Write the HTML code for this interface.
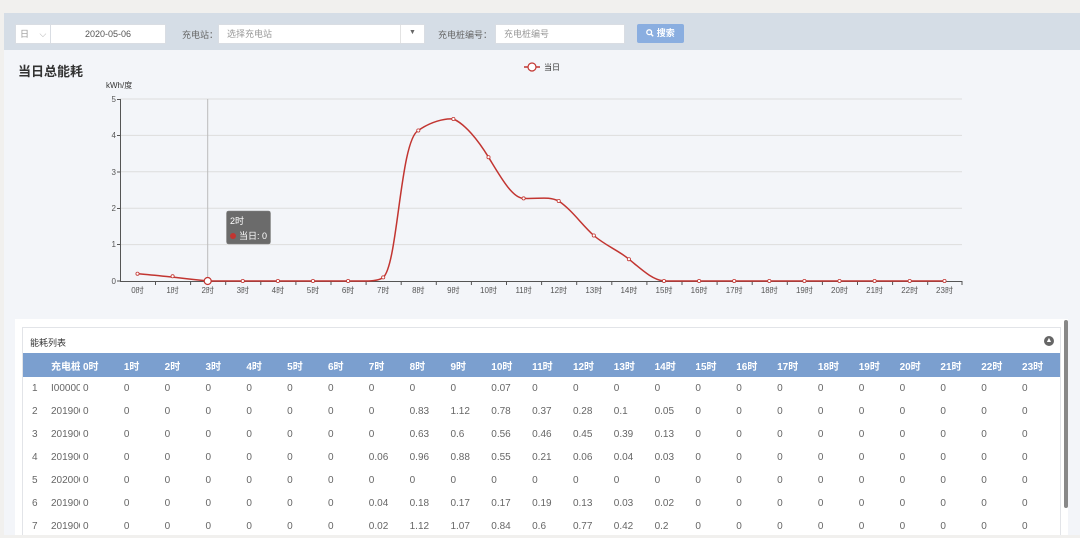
<!DOCTYPE html>
<html><head><meta charset="utf-8"><style>
*{margin:0;padding:0;box-sizing:border-box}
body{width:1080px;height:535px;overflow:hidden;background:#f1f0ee;font-family:"Liberation Sans","Noto Sans CJK SC",sans-serif;font-size:10px;color:#555;position:relative}
.abs{position:absolute}
.bar{left:4px;top:13px;width:1076px;height:37px;background:#d5dde6}
.main{left:4px;top:50px;width:1076px;height:485px;background:#f3f5f9}
.inp{background:#fff;border:1px solid #d9dde3;height:20px;top:24px;line-height:18px;color:#999;font-size:9px}
.panel{left:15px;top:319px;width:1053px;height:216px;background:#fff}
.box{left:22px;top:327px;width:1039px;height:208px;border:1px solid #e2e4e8;border-bottom:none}
table{border-collapse:collapse;table-layout:fixed;position:absolute;left:23px;top:353px;width:1037px}
td{height:23px;padding-left:3px;white-space:nowrap;overflow:hidden;color:#666;font-size:10px}
tr.h td{background:#7b9fcf;color:#fff;font-weight:bold;height:24px}
</style></head><body>
<div class="abs bar"></div>
<div class="abs main"></div>
<div class="abs inp" style="left:15px;width:36px;padding-left:4px">日 <span style="margin-left:8px;color:#aaa">⌵</span></div>
<div class="abs inp" style="left:50px;width:116px;text-align:center;color:#555">2020-05-06</div>
<div class="abs" style="left:182px;top:28px;font-size:9px;color:#666">充电站：</div>
<div class="abs inp" style="left:218px;width:207px;padding-left:8px">选择充电站</div>
<div class="abs" style="left:400px;top:25px;width:1px;height:18px;background:#e3e3e3"></div>
<div class="abs" style="left:409px;top:29px;font-size:7px;color:#666">▼</div>
<div class="abs" style="left:438px;top:28px;font-size:9px;color:#666">充电桩编号：</div>
<div class="abs inp" style="left:495px;width:130px;padding-left:8px">充电桩编号</div>
<div class="abs" style="left:637px;top:24px;width:47px;height:19px;background:#8aaee0;border-radius:2px;color:#fff;font-size:9px;font-weight:bold;line-height:19px;text-align:center"><svg width="8" height="8" viewBox="0 0 10 10" style="vertical-align:-1px"><circle cx="4" cy="4" r="3" fill="none" stroke="#fff" stroke-width="1.6"/><path d="M6.2 6.2L9 9" stroke="#fff" stroke-width="1.8"/></svg> 搜索</div>
<div class="abs" style="left:18px;top:61px;font-size:13px;font-weight:bold;color:#333">当日总能耗</div>
<svg class="abs" style="left:0;top:50px" width="1080" height="260">
<g transform="translate(0,-50)">
<line x1="524" y1="67" x2="540" y2="67" stroke="#c23531" stroke-width="1.5"/><circle cx="532" cy="67" r="4" fill="#fff" stroke="#c23531" stroke-width="1.2"/>
<text x="544" y="70" font-size="8" fill="#333">当日</text>
<text x="106" y="88" font-size="8" fill="#333">kWh/度</text>
<g stroke="#ddd" stroke-width="1">
<line x1="120" y1="99" x2="962" y2="99"/><line x1="120" y1="135.4" x2="962" y2="135.4"/><line x1="120" y1="171.8" x2="962" y2="171.8"/><line x1="120" y1="208.2" x2="962" y2="208.2"/><line x1="120" y1="244.6" x2="962" y2="244.6"/></g>
<line x1="207.7" y1="99" x2="207.7" y2="281" stroke="#bbb"/>
<line x1="120.5" y1="99" x2="120.5" y2="281" stroke="#555"/>
<line x1="120" y1="281.5" x2="962" y2="281.5" stroke="#555"/>
<g font-size="8" fill="#555" text-anchor="end">
<text x="116" y="102">5</text><text x="116" y="138">4</text><text x="116" y="175">3</text><text x="116" y="211">2</text><text x="116" y="247">1</text><text x="116" y="284">0</text></g>
<g stroke="#555">
<line x1="117" y1="99.5" x2="120" y2="99.5"/><line x1="117" y1="135.5" x2="120" y2="135.5"/><line x1="117" y1="172" x2="120" y2="172"/><line x1="117" y1="208.5" x2="120" y2="208.5"/><line x1="117" y1="244.5" x2="120" y2="244.5"/><line x1="117" y1="281" x2="120" y2="281"/>
<path d="M155.5 281v4M190.6 281v4M225.7 281v4M260.8 281v4M295.9 281v4M331 281v4M366.1 281v4M401.2 281v4M436.3 281v4M471.4 281v4M506.5 281v4M541.6 281v4M576.7 281v4M611.8 281v4M646.9 281v4M682 281v4M717.1 281v4M752.2 281v4M787.3 281v4M822.4 281v4M857.5 281v4M892.6 281v4M927.7 281v4M962 281v4"/></g>
<g font-size="8" fill="#555" text-anchor="middle">
<text x="137.5" y="293">0时</text><text x="172.6" y="293">1时</text><text x="207.7" y="293">2时</text><text x="242.8" y="293">3时</text><text x="277.9" y="293">4时</text><text x="313" y="293">5时</text><text x="348.1" y="293">6时</text><text x="383.2" y="293">7时</text><text x="418.3" y="293">8时</text><text x="453.4" y="293">9时</text><text x="488.5" y="293">10时</text><text x="523.6" y="293">11时</text><text x="558.7" y="293">12时</text><text x="593.8" y="293">13时</text><text x="628.9" y="293">14时</text><text x="664" y="293">15时</text><text x="699.1" y="293">16时</text><text x="734.2" y="293">17时</text><text x="769.3" y="293">18时</text><text x="804.4" y="293">19时</text><text x="839.5" y="293">20时</text><text x="874.6" y="293">21时</text><text x="909.7" y="293">22时</text><text x="944.5" y="293">23时</text></g>
<path fill="none" stroke="#c23531" stroke-width="1.5" d="M137.5,273.7 C155,275 190,279 207.7,281 L365,281 C375,281 380,280 383.2,277.4 C398,265 400,140 418.3,130.5 C430,122 445,118 453.4,119 C465,124 478,140 488.5,157.2 C500,176 512,198 523.6,198.4 C540,199 548,196 558.7,201 C572,210 582,225 593.8,235.5 C606,246 618,250 628.9,259.2 C640,268 652,280 664,281 L944.5,281"/>
<g fill="#fff" stroke="#c23531" stroke-width="0.8">
<circle cx="137.5" cy="273.7" r="1.6"/><circle cx="172.6" cy="276.3" r="1.6"/><circle cx="242.8" cy="281" r="1.6"/><circle cx="277.9" cy="281" r="1.6"/><circle cx="313" cy="281" r="1.6"/><circle cx="348.1" cy="281" r="1.6"/><circle cx="383.2" cy="277.4" r="1.6"/><circle cx="418.3" cy="130.5" r="1.6"/><circle cx="453.4" cy="119" r="1.6"/><circle cx="488.5" cy="157.2" r="1.6"/><circle cx="523.6" cy="198.4" r="1.6"/><circle cx="558.7" cy="201" r="1.6"/><circle cx="593.8" cy="235.5" r="1.6"/><circle cx="628.9" cy="259.2" r="1.6"/><circle cx="664" cy="281" r="1.6"/><circle cx="699.1" cy="281" r="1.6"/><circle cx="734.2" cy="281" r="1.6"/><circle cx="769.3" cy="281" r="1.6"/><circle cx="804.4" cy="281" r="1.6"/><circle cx="839.5" cy="281" r="1.6"/><circle cx="874.6" cy="281" r="1.6"/><circle cx="909.7" cy="281" r="1.6"/><circle cx="944.5" cy="281" r="1.6"/>
<circle cx="207.7" cy="281" r="3.5" stroke-width="1.2"/></g>
<rect x="226.5" y="211" width="44" height="33" rx="2" fill="#6b6b6b" stroke="#888" stroke-width="0.5"/>
<text x="230" y="224" font-size="9" fill="#fff">2时</text>
<circle cx="233" cy="236" r="3" fill="#c23531"/>
<text x="239" y="239" font-size="9" fill="#fff">当日: 0</text>
</g></svg>
<div class="abs panel"></div>
<div class="abs" style="left:1064px;top:320px;width:4px;height:188px;background:#888;border-radius:2px"></div>
<div class="abs box"></div>
<div class="abs" style="left:30px;top:336px;font-size:9px;color:#333">能耗列表</div>
<div class="abs" style="left:1044px;top:336px;width:10px;height:10px;border-radius:50%;background:#666;color:#fff;font-size:7px;line-height:10px;text-align:center">▲</div>
<table>
<colgroup><col style="width:25px"><col style="width:32px"><col span="24" style="width:40.833px"></colgroup>
<tr class="h"><td></td><td>充电桩</td><td>0时</td><td>1时</td><td>2时</td><td>3时</td><td>4时</td><td>5时</td><td>6时</td><td>7时</td><td>8时</td><td>9时</td><td>10时</td><td>11时</td><td>12时</td><td>13时</td><td>14时</td><td>15时</td><td>16时</td><td>17时</td><td>18时</td><td>19时</td><td>20时</td><td>21时</td><td>22时</td><td>23时</td></tr>
<tr><td style="padding-left:9px">1</td><td>I00000</td><td>0</td><td>0</td><td>0</td><td>0</td><td>0</td><td>0</td><td>0</td><td>0</td><td>0</td><td>0</td><td>0.07</td><td>0</td><td>0</td><td>0</td><td>0</td><td>0</td><td>0</td><td>0</td><td>0</td><td>0</td><td>0</td><td>0</td><td>0</td><td>0</td></tr>
<tr><td style="padding-left:9px">2</td><td>201900</td><td>0</td><td>0</td><td>0</td><td>0</td><td>0</td><td>0</td><td>0</td><td>0</td><td>0.83</td><td>1.12</td><td>0.78</td><td>0.37</td><td>0.28</td><td>0.1</td><td>0.05</td><td>0</td><td>0</td><td>0</td><td>0</td><td>0</td><td>0</td><td>0</td><td>0</td><td>0</td></tr>
<tr><td style="padding-left:9px">3</td><td>201900</td><td>0</td><td>0</td><td>0</td><td>0</td><td>0</td><td>0</td><td>0</td><td>0</td><td>0.63</td><td>0.6</td><td>0.56</td><td>0.46</td><td>0.45</td><td>0.39</td><td>0.13</td><td>0</td><td>0</td><td>0</td><td>0</td><td>0</td><td>0</td><td>0</td><td>0</td><td>0</td></tr>
<tr><td style="padding-left:9px">4</td><td>201900</td><td>0</td><td>0</td><td>0</td><td>0</td><td>0</td><td>0</td><td>0</td><td>0.06</td><td>0.96</td><td>0.88</td><td>0.55</td><td>0.21</td><td>0.06</td><td>0.04</td><td>0.03</td><td>0</td><td>0</td><td>0</td><td>0</td><td>0</td><td>0</td><td>0</td><td>0</td><td>0</td></tr>
<tr><td style="padding-left:9px">5</td><td>202000</td><td>0</td><td>0</td><td>0</td><td>0</td><td>0</td><td>0</td><td>0</td><td>0</td><td>0</td><td>0</td><td>0</td><td>0</td><td>0</td><td>0</td><td>0</td><td>0</td><td>0</td><td>0</td><td>0</td><td>0</td><td>0</td><td>0</td><td>0</td><td>0</td></tr>
<tr><td style="padding-left:9px">6</td><td>201900</td><td>0</td><td>0</td><td>0</td><td>0</td><td>0</td><td>0</td><td>0</td><td>0.04</td><td>0.18</td><td>0.17</td><td>0.17</td><td>0.19</td><td>0.13</td><td>0.03</td><td>0.02</td><td>0</td><td>0</td><td>0</td><td>0</td><td>0</td><td>0</td><td>0</td><td>0</td><td>0</td></tr>
<tr><td style="padding-left:9px">7</td><td>201900</td><td>0</td><td>0</td><td>0</td><td>0</td><td>0</td><td>0</td><td>0</td><td>0.02</td><td>1.12</td><td>1.07</td><td>0.84</td><td>0.6</td><td>0.77</td><td>0.42</td><td>0.2</td><td>0</td><td>0</td><td>0</td><td>0</td><td>0</td><td>0</td><td>0</td><td>0</td><td>0</td></tr>
</table>
</body></html>
